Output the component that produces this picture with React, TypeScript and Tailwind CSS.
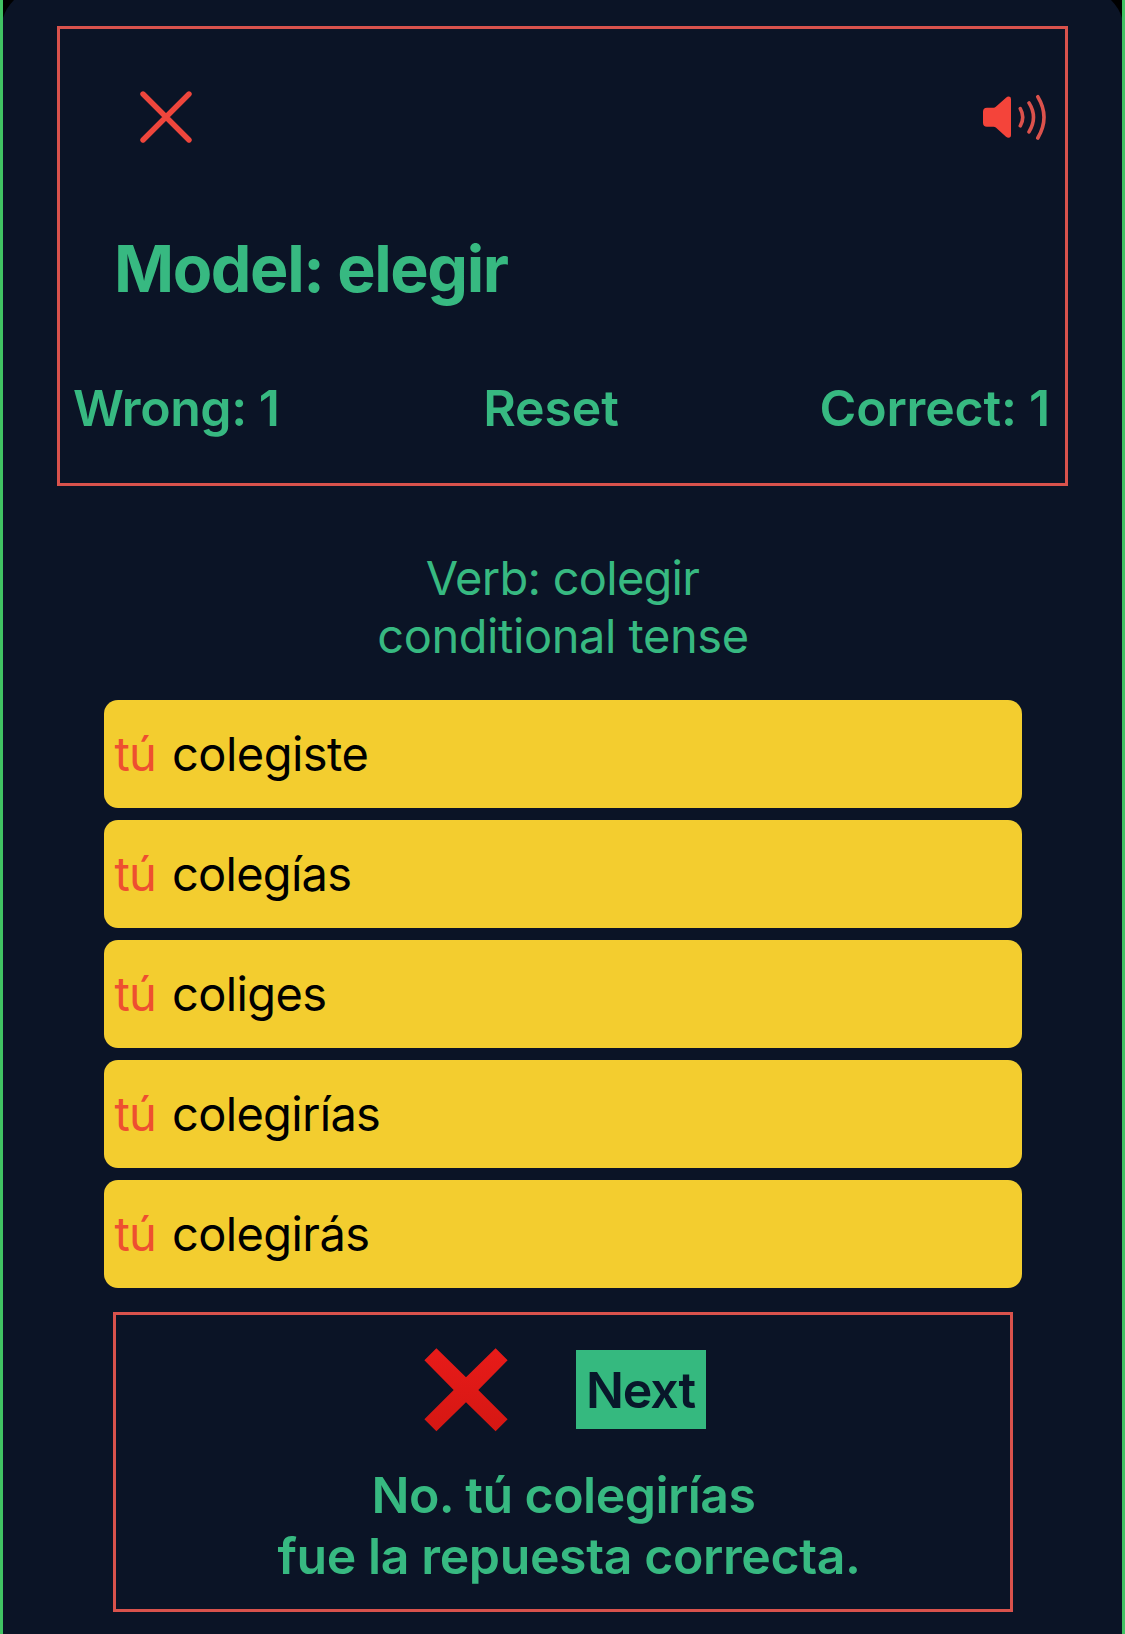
const answers = [
  { word: "colegiste", tracking: "tracking-[-0.54px]" },
  { word: "colegías", tracking: "tracking-[-0.74px]" },
  { word: "coliges", tracking: "tracking-[-0.64px]" },
  { word: "colegirías", tracking: "tracking-[-0.68px]" },
  { word: "colegirás", tracking: "tracking-[-0.62px]" },
];

function CloseIcon() {
  return (
    <svg width="52" height="52" viewBox="0 0 52 52" fill="none" stroke="#ee463c" strokeWidth="5.4" strokeLinecap="round">
      <path d="M3 3 49 49M49 3 3 49" />
    </svg>
  );
}

function SpeakerIcon() {
  return (
    <svg width="66" height="46" viewBox="0 0 66 46" fill="none">
      <path
        d="M5 13.8H11.6Q12.8 13.8 13.8 12.8L24 3.7Q25.3 2.6 26.6 2.6Q29 2.6 29 5V41Q29 43.8 26.6 43.8Q25.2 43.8 24 42.7L13.8 33.6Q12.8 32.7 11.6 32.7H5Q1 32.7 1 28.7V17.8Q1 13.8 5 13.8Z"
        fill="#f4443a"
      />
      <path
        d="M38.3 14.6Q43.2 23.2 38.3 31.8M47 8.9Q56 23.2 47 37.9M55.8 2.7Q68.2 23.2 55.8 44"
        stroke="#dc524c"
        strokeWidth="3.6"
        strokeLinecap="round"
      />
    </svg>
  );
}

function CrossMark() {
  return (
    <svg width="84" height="84" viewBox="0 0 84 84">
      <defs>
        <linearGradient id="cross" x1="0" y1="0" x2="0" y2="1">
          <stop offset="0" stopColor="#e81b19" />
          <stop offset="1" stopColor="#d51713" />
        </linearGradient>
      </defs>
      <path d="M12.4.3 42 29.3 71.6.3 83.6 12.3 54.3 42 83.6 71.3 71.6 83.3 42 54.3 12.4 83.3.4 71.3 29.7 42 .4 12.3Z" fill="url(#cross)" />
    </svg>
  );
}

export default function App() {
  return (
    <div className="relative flex h-[1634px] w-[1125px] flex-col items-center border-x-[3px] border-[#41c363] bg-[#0b1426] pt-[26px] font-['Inter',sans-serif] text-[#37b981]">
      <svg className="absolute top-0 left-0" width="12" height="20" viewBox="0 0 12 20">
        <path d="M0 0H11Q3 8 0 18Z" fill="#000" />
      </svg>
      <svg className="absolute top-0 right-0" width="12" height="20" viewBox="0 0 12 20">
        <path d="M12 0H1Q9 8 12 18Z" fill="#000" />
      </svg>

      <header className="flex h-[460px] w-[1011px] flex-col border-[3px] border-[#d9524c]">
        <div className="flex h-[176px] items-center justify-between pr-[17px] pl-[80px]">
          <button aria-label="Close">
            <CloseIcon />
          </button>
          <button aria-label="Play audio">
            <SpeakerIcon />
          </button>
        </div>
        <h1 className="h-[127px] pl-[54px] text-[64.5px] leading-[129px] font-bold tracking-[-1.4px]">Model: elegir</h1>
        <div className="flex h-[151px] items-center justify-between pt-[2px] pr-[15px] pl-[13px] text-[50px] font-semibold">
          <span className="tracking-[-0.45px]">Wrong: 1</span>
          <button className="pl-[3px] tracking-[-0.1px]">Reset</button>
          <span className="tracking-[-0.2px]">Correct: 1</span>
        </div>
      </header>

      <div className="mt-[63px] text-center text-[47px] leading-[58px]">
        <p className="tracking-[-0.75px]">Verb: colegir</p>
        <p className="pl-px tracking-[-0.45px]">conditional tense</p>
      </div>

      <ul className="mt-[35px] flex w-[918px] flex-col gap-3">
        {answers.map(({ word, tracking }) => (
          <li key={word} className="flex h-[108px] items-center rounded-[14px] bg-[#f3cd2f] pl-[11px] text-[47px] text-black">
            <span className="w-[57.5px] tracking-[-1px] text-[#ee4f30]">tú</span>
            <span className={tracking}>{word}</span>
          </li>
        ))}
      </ul>

      <section className="mt-6 flex h-[300px] w-[900px] flex-col border-[3px] border-[#d9524c] text-[50px] font-semibold">
        <div className="flex h-[149px] items-center justify-center gap-[68px] pl-1">
          <CrossMark />
          <button className="h-[79px] w-[130px] bg-[#35b97f] pt-[2px] tracking-[-1.1px] text-[#08172a]">Next</button>
        </div>
        <div className="pt-px text-center leading-[61px]">
          <p className="pl-[2px] tracking-[-0.53px]">No. tú colegirías</p>
          <p className="pl-[13px] tracking-[-0.39px]">fue la repuesta correcta.</p>
        </div>
      </section>
    </div>
  );
}
